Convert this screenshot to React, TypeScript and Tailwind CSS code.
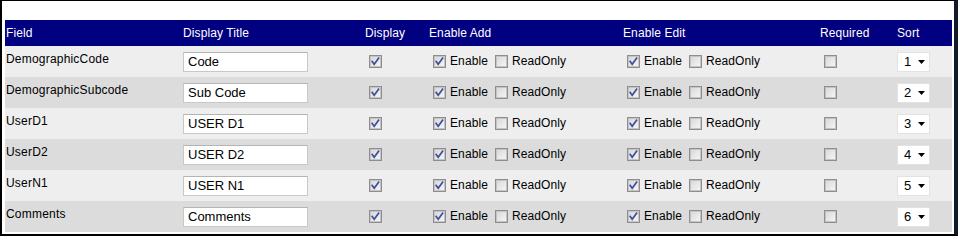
import React from "react";

const rows = [
  { field: "DemographicCode", title: "Code", sort: 1 },
  { field: "DemographicSubcode", title: "Sub Code", sort: 2 },
  { field: "UserD1", title: "USER D1", sort: 3 },
  { field: "UserD2", title: "USER D2", sort: 4 },
  { field: "UserN1", title: "USER N1", sort: 5 },
  { field: "Comments", title: "Comments", sort: 6 },
];

function Box({ checked }: { checked: boolean }) {
  return (
    <svg width="13" height="13" viewBox="0 0 13 13" className="shrink-0">
      <defs>
        <linearGradient id="cbg" x1="0" y1="0" x2="1" y2="1">
          <stop offset="0" stopColor="#d8d8d8" />
          <stop offset="1" stopColor="#f6f6f6" />
        </linearGradient>
      </defs>
      <rect x="0.5" y="0.5" width="12" height="12" fill="#ffffff" stroke="#8e8e8e" />
      <rect x="1.5" y="1.5" width="10" height="10" fill="url(#cbg)" stroke="#c4c4c4" />
      {checked && (
        <path
          d="M3.2 6.4 L5.2 9.2 L9.6 3.2"
          fill="none"
          stroke="#3c4f9c"
          strokeWidth="1.7"
          strokeLinecap="square"
        />
      )}
    </svg>
  );
}

function Check({ checked, label, wide }: { checked: boolean; label?: string; wide?: boolean }) {
  return (
    <span className="flex items-center">
      <span className={(wide ? "ml-[7px]" : "ml-[4px]") + " mr-[4px] flex"}>
        <Box checked={checked} />
      </span>
      {label && <span className="leading-[14px] pb-[2px] tracking-[0.1px]">{label}</span>}
    </span>
  );
}

export default function App() {
  const font = { fontFamily: '"Liberation Sans", Arial, sans-serif' };
  return (
    <div
      className="w-[958px] h-[236px] bg-white border-l-2 border-t border-b-2 border-r-4 border-l-black border-t-black border-b-black border-r-[#0f1b2b] pl-[3px] pt-[19px] pr-[2px] text-[12px] text-black"
      style={font}
    >
      <div className="w-[947px]">
        <div className="grid grid-cols-[178px_182px_64px_194px_197px_77px_55px] h-[26px] items-center bg-[#000080] text-white leading-[14px] tracking-[0.1px]">
          <span className="pl-[1px]">Field</span>
          <span>Display Title</span>
          <span>Display</span>
          <span>Enable Add</span>
          <span>Enable Edit</span>
          <span>Required</span>
          <span>Sort</span>
        </div>
        {rows.map((r, i) => (
          <div
            key={r.field}
            className={
              "grid grid-cols-[178px_182px_64px_194px_197px_77px_55px] h-[31px] items-center " +
              (i % 2 === 0 ? "bg-[#eeeeee]" : "bg-[#dcdcdc]")
            }
          >
            <span className="self-start pt-[6px] pl-[1px] leading-[14px] tracking-[0.2px]">{r.field}</span>
            <div className="flex">
              <div className="w-[125px] h-[20px] bg-white border border-[#c8c8c8] border-t-[#b4b4b4] flex items-center pl-[4px] text-[13px] leading-[15px]">
                {r.title}
              </div>
            </div>
            <div className="flex">
              <Check checked />
            </div>
            <div className="flex items-center">
              <Check checked label="Enable" />
              <Check checked={false} label="ReadOnly" wide />
            </div>
            <div className="flex items-center">
              <Check checked label="Enable" />
              <Check checked={false} label="ReadOnly" wide />
            </div>
            <div className="flex">
              <Check checked={false} />
            </div>
            <div className="flex">
              <div className="w-[33px] h-[20px] bg-white border border-[#e2e2e2] flex items-center pl-[6px] text-[13px] leading-[15px]">
                <span className="w-[14px]">{r.sort}</span>
                <svg width="7" height="4" viewBox="0 0 7 4">
                  <path d="M0 0 H7 L3.5 4 Z" fill="#000" />
                </svg>
              </div>
            </div>
          </div>
        ))}
      </div>
    </div>
  );
}
